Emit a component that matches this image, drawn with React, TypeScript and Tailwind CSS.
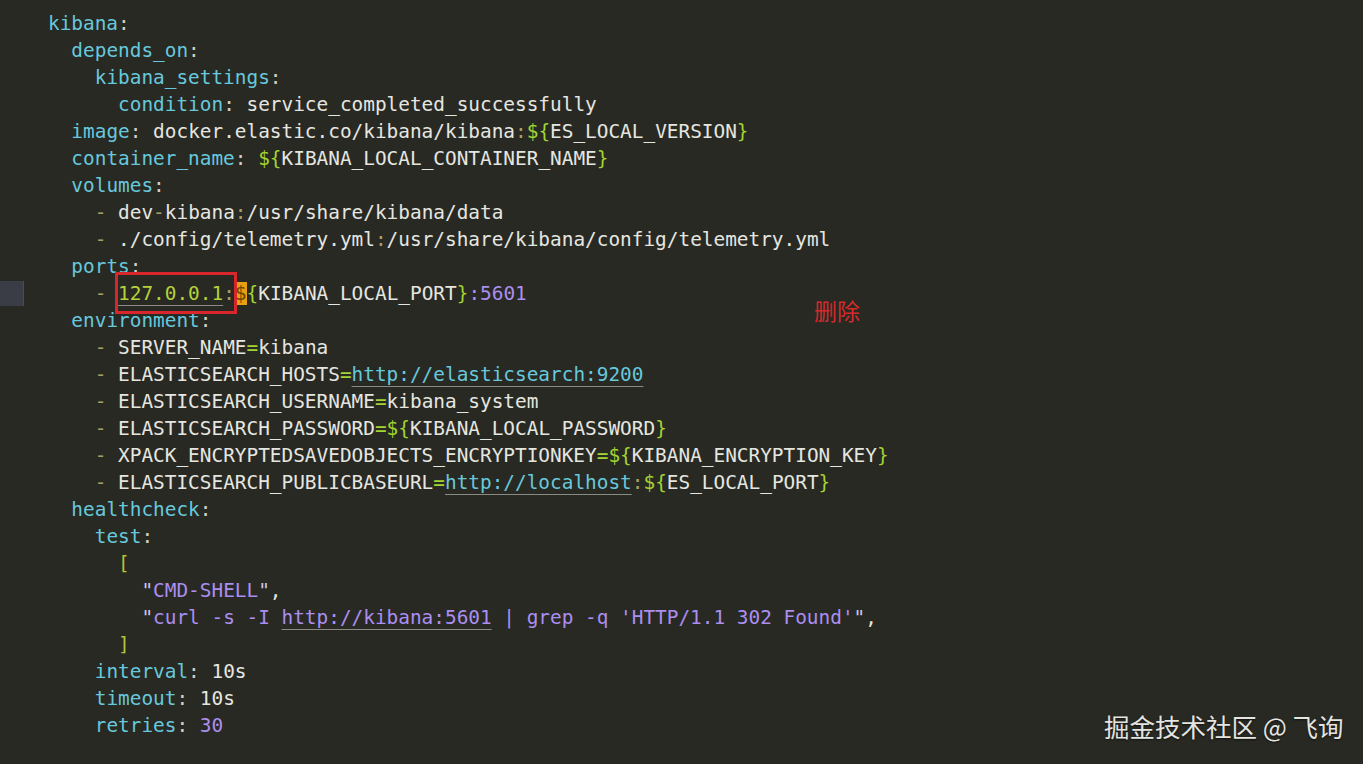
import React from 'react';

const K = 'text-[#67c8dc]';
const C = 'text-[#cfcfc2]';
const T = 'text-[#e6e6e0]';
const D = 'text-[#a89f63]';
const G = 'text-[#a3d431]';
const P = 'text-[#ab8ef0]';
const Q = 'text-[#cfc5e6]';
const U = 'underline decoration-[#8a8a86] decoration-1 underline-offset-[5px]';

function Key({ k, i = 0 }: { k: string; i?: number }) {
  return (
    <>
      {' '.repeat(i)}
      <span className={K}>{k}</span>
      <span className={C}>:</span>
    </>
  );
}

function Dash({ i }: { i: number }) {
  return (
    <>
      {' '.repeat(i)}
      <span className={D}>-</span>{' '}
    </>
  );
}

function Env({ name }: { name: string }) {
  return (
    <>
      <span className={T}>{name}</span>
      <span className={G}>=</span>
    </>
  );
}

function Var({ name }: { name: string }) {
  return (
    <>
      <span className={G}>{'${'}</span>
      <span className={T}>{name}</span>
      <span className={G}>{'}'}</span>
    </>
  );
}

function Line({ children, mark = false }: { children?: React.ReactNode; mark?: boolean }) {
  return (
    <div className="flex h-[27px] items-center">
      <div className="w-[24px] shrink-0 h-[25px]">
        {mark && <div className="h-full w-full bg-[#3a3d46] border-r border-[#4a4d56]" />}
      </div>
      <div className="pl-[24px] whitespace-pre leading-[27px]">{children}</div>
    </div>
  );
}

export default function App() {
  return (
    <div className="relative w-[1363px] h-[764px] overflow-hidden bg-[#282923] pt-[10px] font-['DejaVu_Sans_Mono',monospace] text-[19.4px] text-[#e6e6e0]">
      <Line><Key k="kibana" /></Line>
      <Line><Key k="depends_on" i={2} /></Line>
      <Line><Key k="kibana_settings" i={4} /></Line>
      <Line><Key k="condition" i={6} /> <span className={T}>service_completed_successfully</span></Line>
      <Line>
        <Key k="image" i={2} /> <span className={T}>docker.elastic.co/kibana/kibana</span>
        <span className={D}>:</span>
        <Var name="ES_LOCAL_VERSION" />
      </Line>
      <Line><Key k="container_name" i={2} /> <Var name="KIBANA_LOCAL_CONTAINER_NAME" /></Line>
      <Line><Key k="volumes" i={2} /></Line>
      <Line>
        <Dash i={4} />
        <span className={T}>dev</span><span className={D}>-</span><span className={T}>kibana</span>
        <span className={D}>:</span><span className={T}>/usr/share/kibana/data</span>
      </Line>
      <Line>
        <Dash i={4} />
        <span className={T}>./config/telemetry.yml</span>
        <span className={D}>:</span><span className={T}>/usr/share/kibana/config/telemetry.yml</span>
      </Line>
      <Line><Key k="ports" i={2} /></Line>
      <Line mark>
        <Dash i={4} />
        <span className={`text-[#b4d23a] ${U}`}>127.0.0.1</span>
        <span className={D}>:</span>
        <span className="bg-[#e89f12] text-[#6b4800]">$</span>
        <span className={G}>{'{'}</span>
        <span className={T}>KIBANA_LOCAL_PORT</span>
        <span className={G}>{'}'}</span>
        <span className={P}>:5601</span>
      </Line>
      <Line><Key k="environment" i={2} /></Line>
      <Line><Dash i={4} /><Env name="SERVER_NAME" /><span className={T}>kibana</span></Line>
      <Line>
        <Dash i={4} /><Env name="ELASTICSEARCH_HOSTS" />
        <span className={`${K} ${U}`}>http://elasticsearch:9200</span>
      </Line>
      <Line><Dash i={4} /><Env name="ELASTICSEARCH_USERNAME" /><span className={T}>kibana_system</span></Line>
      <Line><Dash i={4} /><Env name="ELASTICSEARCH_PASSWORD" /><Var name="KIBANA_LOCAL_PASSWORD" /></Line>
      <Line>
        <Dash i={4} /><Env name="XPACK_ENCRYPTEDSAVEDOBJECTS_ENCRYPTIONKEY" />
        <Var name="KIBANA_ENCRYPTION_KEY" />
      </Line>
      <Line>
        <Dash i={4} /><Env name="ELASTICSEARCH_PUBLICBASEURL" />
        <span className={`${K} ${U}`}>http://localhost</span>
        <span className={D}>:</span>
        <Var name="ES_LOCAL_PORT" />
      </Line>
      <Line><Key k="healthcheck" i={2} /></Line>
      <Line><Key k="test" i={4} /></Line>
      <Line>{'      '}<span className="text-[#b3c23a]">[</span></Line>
      <Line>
        {'        '}<span className={Q}>"</span><span className={P}>CMD-SHELL</span>
        <span className={Q}>"</span><span className={T}>,</span>
      </Line>
      <Line>
        {'        '}<span className={Q}>"</span>
        <span className={P}>curl -s -I </span>
        <span className={`${P} ${U}`}>http://kibana:5601</span>
        <span className={P}> | grep -q 'HTTP/1.1 302 Found'</span>
        <span className={Q}>"</span><span className={T}>,</span>
      </Line>
      <Line>{'      '}<span className="text-[#b3c23a]">]</span></Line>
      <Line><Key k="interval" i={4} /> <span className={T}>10s</span></Line>
      <Line><Key k="timeout" i={4} /> <span className={T}>10s</span></Line>
      <Line><Key k="retries" i={4} /> <span className={P}>30</span></Line>

      <div className="absolute left-[115px] top-[272px] w-[122px] h-[42px] border-[3px] border-[#d9262c]" />
      <div className="absolute left-[814px] top-[295px] text-[23px] leading-[30px] text-[#d42a2a] font-['Noto_Sans_CJK_SC',sans-serif]">
        删除
      </div>
      <div className="absolute left-[1104px] top-[710px] text-[25.5px] leading-[32px] text-[#e4e4e0] font-['Noto_Sans_CJK_SC',sans-serif] [text-shadow:0_1px_2px_rgba(0,0,0,0.6)]">
        掘金技术社区 @ 飞询
      </div>
    </div>
  );
}
